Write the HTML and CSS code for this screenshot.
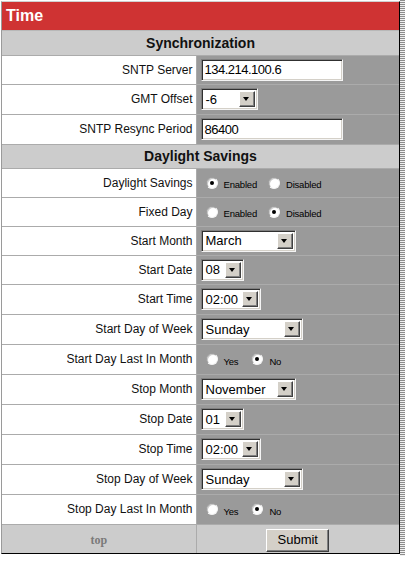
FILE: index.html
```html
<!DOCTYPE html>
<html>
<head>
<meta charset="utf-8">
<title>Time</title>
<link rel="stylesheet" href="styles.css">
</head>
<body>
<div class="page">
  <div class="frame">
    <div class="title">Time</div>
    <table class="form">
      <colgroup><col class="c-label"><col class="c-value"></colgroup>
      <tr class="section"><th colspan="2">Synchronization</th></tr>
      <tr class="r29">
        <td class="label">SNTP Server</td>
        <td class="value"><span class="textbox">134.214.100.6</span></td>
      </tr>
      <tr>
        <td class="label">GMT Offset</td>
        <td class="value"><span class="select w-gmt"><span class="val">-6</span><span class="btn"><span class="arrow"></span></span></span></td>
      </tr>
      <tr>
        <td class="label">SNTP Resync Period</td>
        <td class="value"><span class="textbox">86400</span></td>
      </tr>
      <tr class="section"><th colspan="2">Daylight Savings</th></tr>
      <tr class="r29">
        <td class="label">Daylight Savings</td>
        <td class="value"><span class="radios"><span class="radio on"></span><span class="rlabel">Enabled</span><span class="radio"></span><span class="rlabel">Disabled</span></span></td>
      </tr>
      <tr class="r29">
        <td class="label">Fixed Day</td>
        <td class="value"><span class="radios"><span class="radio"></span><span class="rlabel">Enabled</span><span class="radio on"></span><span class="rlabel">Disabled</span></span></td>
      </tr>
      <tr class="r29">
        <td class="label">Start Month</td>
        <td class="value"><span class="select w-month"><span class="val">March</span><span class="btn"><span class="arrow"></span></span></span></td>
      </tr>
      <tr class="r29">
        <td class="label">Start Date</td>
        <td class="value"><span class="select w-date"><span class="val">08</span><span class="btn"><span class="arrow"></span></span></span></td>
      </tr>
      <tr>
        <td class="label">Start Time</td>
        <td class="value"><span class="select w-time"><span class="val">02:00</span><span class="btn"><span class="arrow"></span></span></span></td>
      </tr>
      <tr>
        <td class="label">Start Day of Week</td>
        <td class="value"><span class="select w-dow"><span class="val">Sunday</span><span class="btn"><span class="arrow"></span></span></span></td>
      </tr>
      <tr>
        <td class="label">Start Day Last In Month</td>
        <td class="value"><span class="radios"><span class="radio"></span><span class="rlabel yes">Yes</span><span class="radio on"></span><span class="rlabel">No</span></span></td>
      </tr>
      <tr>
        <td class="label">Stop Month</td>
        <td class="value"><span class="select w-month"><span class="val">November</span><span class="btn"><span class="arrow"></span></span></span></td>
      </tr>
      <tr>
        <td class="label">Stop Date</td>
        <td class="value"><span class="select w-date"><span class="val">01</span><span class="btn"><span class="arrow"></span></span></span></td>
      </tr>
      <tr>
        <td class="label">Stop Time</td>
        <td class="value"><span class="select w-time"><span class="val">02:00</span><span class="btn"><span class="arrow"></span></span></span></td>
      </tr>
      <tr>
        <td class="label">Stop Day of Week</td>
        <td class="value"><span class="select w-dow"><span class="val">Sunday</span><span class="btn"><span class="arrow"></span></span></span></td>
      </tr>
      <tr>
        <td class="label">Stop Day Last In Month</td>
        <td class="value"><span class="radios"><span class="radio"></span><span class="rlabel yes">Yes</span><span class="radio on"></span><span class="rlabel">No</span></span></td>
      </tr>
      <tr class="footer">
        <td class="top"><a href="#">top</a></td>
        <td class="submit"><span class="button">Submit</span></td>
      </tr>
    </table>
  </div>
  <div class="edge"></div>
</div>
</body>
</html>
```

FILE: styles.css
```css
html, body {
  margin: 0;
  padding: 0;
  background: #fff;
}

body {
  font-family: "Liberation Sans", Arial, sans-serif;
  color: #000;
}

.page {
  display: flex;
  align-items: flex-start;
  width: 405px;
}

.frame {
  margin-left: 1px;
  margin-top: 1px;
  width: 397px;
  border-left: 1px solid #9a9a9a;
  border-right: 1px solid #000;
  border-bottom: 1px solid #000;
  border-top: 1px solid #d0d0d0;
}

.edge {
  width: 5px;
  height: 556px;
  background: repeating-linear-gradient(to bottom, #8c8c8c 0 1px, #f0f0f0 1px 2px);
}

.title {
  height: 28px;
  line-height: 28px;
  background: #cf3333;
  color: #fff;
  font-weight: bold;
  font-size: 16px;
  padding-left: 4px;
  border-bottom: 1px solid #b8b8b8;
}

.form {
  width: 397px;
  border-collapse: collapse;
  border-spacing: 0;
  table-layout: fixed;
}

.c-label { width: 194px; }
.c-value { width: 203px; }

.form td,
.form th {
  padding: 0;
  border-bottom: 1px solid #ababab;
  box-sizing: border-box;
  height: 30px;
}

.form tr.r29 td {
  height: 29px;
}

.section th {
  height: 24px;
  background: #cccccc;
  font-size: 14px;
  font-weight: bold;
  color: #111;
  text-align: center;
}

.form td.label {
  background: #fff;
  text-align: right;
  font-size: 12px;
  padding-right: 3px;
  border-right: 1px solid #ababab;
  white-space: nowrap;
  color: #111;
}

.form td.value {
  background: #9a9a9a;
  padding-left: 4px;
}

.textbox {
  display: flex;
  align-items: center;
  box-sizing: border-box;
  width: 142px;
  height: 22px;
  background: #fff;
  border: 1px solid;
  border-color: #808080 #f4f4f4 #f4f4f4 #808080;
  box-shadow: inset 1px 1px 0 #303030, inset -1px -1px 0 #d4d0c8;
  padding-left: 3px;
  font-size: 13px;
  letter-spacing: -0.5px;
}

.select {
  display: flex;
  align-items: center;
  box-sizing: border-box;
  height: 22px;
  background: #fff;
  border: 1px solid;
  border-color: #808080 #f4f4f4 #f4f4f4 #808080;
  box-shadow: inset 1px 1px 0 #303030, inset -1px -1px 0 #d4d0c8;
  padding: 2px 2px 2px 4px;
  font-size: 13px;
}

.select .val {
  flex: 1;
}

.w-gmt { width: 57px; }
.w-month { width: 95px; }
.w-date { width: 43px; }
.w-time { width: 60px; }
.w-dow { width: 102px; }

.btn {
  display: flex;
  align-items: center;
  justify-content: center;
  box-sizing: border-box;
  width: 16px;
  height: 16px;
  background: #d4d0c8;
  border: 1px solid;
  border-color: #fff #404040 #404040 #fff;
  box-shadow: inset -1px -1px 0 #808080;
}

.arrow {
  width: 0;
  height: 0;
  border-left: 3px solid transparent;
  border-right: 3px solid transparent;
  border-top: 4px solid #000;
  margin-left: -1px;
}

.radios {
  display: flex;
  align-items: center;
  padding-left: 5px;
}

.radio {
  position: relative;
  box-sizing: border-box;
  width: 12px;
  height: 12px;
  border-radius: 50%;
  background: #fff;
  border: 1px solid;
  border-color: #9a9a9a #f4f4f4 #f4f4f4 #9a9a9a;
  box-shadow: inset 1px 1px 0 #c8c8c8;
}

.radio.on::after {
  content: "";
  position: absolute;
  left: 3px;
  top: 3px;
  width: 4px;
  height: 4px;
  border-radius: 50%;
  background: #000;
}

.rlabel {
  font-size: 9.5px;
  margin-left: 6px;
  margin-right: 11px;
  margin-top: 4px;
  letter-spacing: -0.2px;
}

.rlabel.yes {
  margin-right: 13px;
}

.form tr.footer td {
  background: #cccccc;
  height: 29px;
  border-bottom: none;
}

.form tr.footer td.top {
  text-align: center;
  border-right: 1px solid #ababab;
}

.top a {
  font-family: "Liberation Serif", "Times New Roman", serif;
  font-weight: bold;
  font-size: 12px;
  color: #7a7a7a;
  text-decoration: none;
}

.form tr.footer td.submit {
  text-align: center;
  padding-top: 3px;
}

.button {
  display: inline-block;
  box-sizing: border-box;
  width: 63px;
  height: 23px;
  line-height: 20px;
  background: #d4d0c8;
  border: 1px solid;
  border-color: #fff #404040 #404040 #fff;
  box-shadow: inset -1px -1px 0 #808080;
  font-size: 13px;
  text-align: center;
  vertical-align: middle;
}
```
